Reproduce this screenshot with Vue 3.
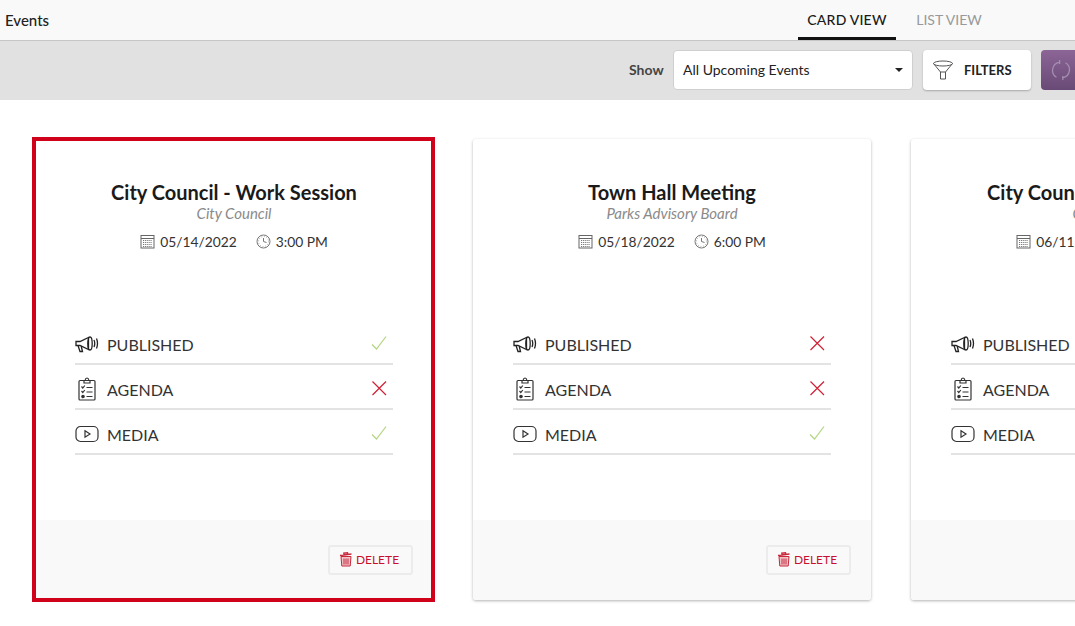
<script setup>
const cards = [
  { title: 'City Council - Work Session', sub: 'City Council', date: '05/14/2022', time: '3:00 PM', selected: true, st: [true, false, true] },
  { title: 'Town Hall Meeting', sub: 'Parks Advisory Board', date: '05/18/2022', time: '6:00 PM', selected: false, st: [false, false, true] },
  { title: 'City Council - Work Session', sub: 'City Council', date: '06/11/2022', time: '6:00 PM', selected: false, st: [true, true, true] },
]
const labels = ['PUBLISHED', 'AGENDA', 'MEDIA']
</script>

<template>
  <div class="page">
    <header class="top">
      <div class="heading">Events</div>
      <nav class="tabs">
        <a class="tab active">CARD VIEW</a>
        <a class="tab">LIST VIEW</a>
      </nav>
    </header>
    <div class="toolbar">
      <span class="show">Show</span>
      <div class="select">
        <span class="sel-text">All Upcoming Events</span>
        <i class="caret"></i>
      </div>
      <button class="filters">
        <svg width="22" height="22" viewBox="0 0 22 22" fill="none" stroke="#555" stroke-width="1">
          <ellipse cx="11" cy="4.5" rx="9.5" ry="2.5" />
          <path d="M1.5 4.5 L8.5 13 V20 H13.5 V13 L20.5 4.5" />
          <path d="M8.5 13 H13.5" />
        </svg>
        <span>FILTERS</span>
      </button>
      <button class="refresh">
        <svg width="20" height="22" viewBox="0 0 22 24" fill="none" stroke="#a48eb0" stroke-width="1.4">
          <path d="M6 20 A9 9 0 0 1 9 3.5" />
          <path d="M16 4 A9 9 0 0 1 13 20.5" />
          <path d="M9.5 1 L9.5 5.5 M13 23 L13 18.5" />
        </svg>
      </button>
    </div>
    <main class="cards">
      <article v-for="c in cards" :key="c.date" class="card" :class="{ selected: c.selected }">
        <div class="body">
          <h2 class="title">{{ c.title }}</h2>
          <div class="sub">{{ c.sub }}</div>
          <div class="when">
            <svg width="15" height="15" viewBox="0 0 15 15" fill="none" stroke="#666" stroke-width="1">
              <rect x="1" y="1.5" width="13" height="12.5" />
              <path d="M1 4.5 H14" />
              <path d="M3 6.5 H12 M3 8.5 H12 M3 10.5 H12 M3 12.5 H12" stroke-dasharray="1.2 0.9" stroke="#777" />
            </svg>
            <span class="date">{{ c.date }}</span>
            <svg class="clock" width="15" height="15" viewBox="0 0 15 15" fill="none" stroke="#777" stroke-width="1">
              <circle cx="7.5" cy="7.5" r="6.5" />
              <circle cx="7.5" cy="7.5" r="5" stroke="#999" stroke-dasharray="0.8 1.8" />
              <path d="M7.5 4 V7.5 L10.5 8.5" />
            </svg>
            <span>{{ c.time }}</span>
          </div>
          <ul class="rows">
            <li v-for="(l, i) in labels" :key="l" class="row">
              <span class="ico">
                <svg v-if="i === 0" width="24" height="18" viewBox="0 0 24 18" fill="none" stroke="#222" stroke-width="1.3">
                  <path d="M1 7 V10.5 H3 L5 10.5 L13.5 14.5 V2.5 L5 6.5 H1 Z" />
                  <path d="M3 10.5 L5 16.5 H7.5 L6.2 11" />
                  <ellipse cx="15" cy="8.5" rx="2.2" ry="6.5" />
                  <path d="M19 5 Q20.5 8.5 19 12 M21.5 3.5 Q23.5 8.5 21.5 13.5" />
                </svg>
                <svg v-else-if="i === 1" width="24" height="24" viewBox="0 0 24 24" fill="none" stroke="#333" stroke-width="1.2">
                  <rect x="4" y="3.5" width="16" height="19.5" rx="1" />
                  <path d="M9 3.5 H10 Q10.5 1 12 1 Q13.5 1 14 3.5 H15 V6 H9 Z" />
                  <path d="M6.5 9.5 L7.8 11 L9.8 8.5 M6.5 14 L7.8 15.5 L9.8 13" />
                  <circle cx="8" cy="19.5" r="1.2" fill="#333" />
                  <path d="M11.5 10.5 H17.5 M11.5 15 H17.5 M11.5 19.5 H17.5" />
                </svg>
                <svg v-else width="24" height="18" viewBox="0 0 24 18" fill="none" stroke="#333" stroke-width="1.2">
                  <rect x="1" y="1.5" width="22" height="15" rx="4.5" />
                  <path d="M10 5.8 L15 9 L10 12.2 Z" />
                </svg>
              </span>
              <span class="label">{{ l }}</span>
              <svg v-if="c.st[i]" class="mark" width="16" height="16" viewBox="0 0 16 16" fill="none" stroke="#b3d580" stroke-width="1.2">
                <path d="M1 9.5 L5.5 14 L15 1.5" />
              </svg>
              <svg v-else class="mark" width="16" height="16" viewBox="0 0 16 16" fill="none" stroke="#cf2136" stroke-width="1.2">
                <path d="M1.5 1.5 L15 15 M15 1.5 L1.5 15" />
              </svg>
            </li>
          </ul>
        </div>
        <footer class="foot">
          <button class="del">
            <svg width="14" height="15" viewBox="0 0 14 15" fill="none" stroke="#c8283c" stroke-width="1">
              <path d="M1 3.5 L12.5 2 M5 2.8 L4.8 1 L8.5 0.8 L8.8 2.2" stroke-width="1.3" />
              <path d="M2 4.5 H12 L11.2 14 H2.8 Z" fill="#f0c4c9" />
              <path d="M5 6.5 V12.5 M7 6.5 V12.5 M9 6.5 V12.5" />
            </svg>
            <span>DELETE</span>
          </button>
        </footer>
      </article>
    </main>
  </div>
</template>

<style>
html, body { margin: 0; background: #fff; overflow: hidden; }
</style>

<style scoped>
.page { width: 1075px; height: 626px; overflow: hidden; font-family: Lato, "Liberation Sans", sans-serif; color: #1a1a1a; }
.top { height: 40px; background: #f9f9f9; border-bottom: 1px solid #c6c6c6; display: flex; justify-content: space-between; padding-left: 5px; box-sizing: content-box; }
.heading { font-size: 15px; font-weight: 500; line-height: 40px; color: #222; }
.tabs { display: flex; gap: 0; margin-right: 77px; }
.tab { width: 98px; height: 40px; box-sizing: border-box; padding-top: 11px; font-size: 14px; line-height: 18px; text-align: center; color: #97999b; margin-left: 4px; }
.tab.active { color: #1a1a1a; border-bottom: 3px solid #111; margin-left: 0; font-weight: 500; letter-spacing: 0.2px; }
.toolbar { height: 59px; background: #e1e1e1; display: flex; align-items: center; padding: 0 0 1px 629px; box-sizing: border-box; }
.show { font-size: 14px; line-height: 16px; font-weight: 700; color: #444; width: 44px; flex: none; }
.select { width: 240px; flex: none; height: 40px; box-sizing: border-box; background: #fff; border: 1px solid #cfcfcf; border-radius: 4px; display: flex; align-items: center; justify-content: space-between; padding: 0 9px; font-size: 14px; color: #222; }
.sel-text { line-height: 16px; }
.caret { width: 0; height: 0; border-left: 4px solid transparent; border-right: 4px solid transparent; border-top: 4px solid #222; }
.filters { width: 108px; height: 40px; margin-left: 10px; box-sizing: border-box; background: #fff; border: 0; border-radius: 4px; box-shadow: 0 1px 2px rgba(0,0,0,.25); display: flex; align-items: center; gap: 10px; padding: 0 0 0 9px; font: 700 13px Lato, sans-serif; color: #222; flex: none; }
.refresh { width: 60px; height: 40px; margin-left: 10px; border: 0; border-radius: 4px; background: linear-gradient(#8b6596, #694a76); display: flex; align-items: center; justify-content: flex-start; flex: none; padding: 0 0 0 10px; box-sizing: border-box; }
.cards { display: grid; grid-template-columns: repeat(3, 398px); gap: 40px; padding: 39px 0 0 35px; width: 1300px; }
.card { height: 461px; background: #fff; border-radius: 3px; box-shadow: 0 1px 3px rgba(0,0,0,.3); display: flex; flex-direction: column; overflow: hidden; }
.card.selected { border-radius: 0; box-shadow: none; margin-left: -1px; outline: 4px solid #d0021b; outline-offset: -2px; overflow: visible; }
.card.selected .body { padding-left: 41px; }
.body { flex: 1; padding: 39px 40px 0; text-align: center; }
.title { margin: 0; font-size: 20px; line-height: 28px; font-weight: 700; color: #1a1a1a; white-space: nowrap; }
.sub { font-size: 15px; line-height: 15px; font-style: italic; color: #8a8a8a; white-space: nowrap; }
.when { display: flex; justify-content: center; align-items: center; height: 20px; margin-top: 10px; font-size: 13.8px; gap: 5px; color: #333; white-space: nowrap; }
.clock { margin-left: 14px; }
.rows { list-style: none; margin: 69px 0 0; padding: 0; }
.row { height: 45px; box-sizing: border-box; border-bottom: 2px solid #e3e3e3; display: flex; align-items: center; font-size: 16px; color: #333; padding-top: 5px; }
.ico { width: 32px; display: flex; align-items: center; }
.label { flex: 1; text-align: left; }
.mark { margin-right: 6px; margin-top: -3px; }
.foot { height: 80px; background: #f9f9f9; display: flex; justify-content: flex-end; align-items: center; padding: 0 20px; flex: none; }
.del { width: 85px; height: 30px; box-sizing: border-box; background: #f9f9f9; border: 2px solid #ececec; border-radius: 3px; display: flex; align-items: center; justify-content: center; gap: 3px; font: 12px/14px Lato, sans-serif; color: #c8102e; padding: 0 3px 1px 0; }
</style>
